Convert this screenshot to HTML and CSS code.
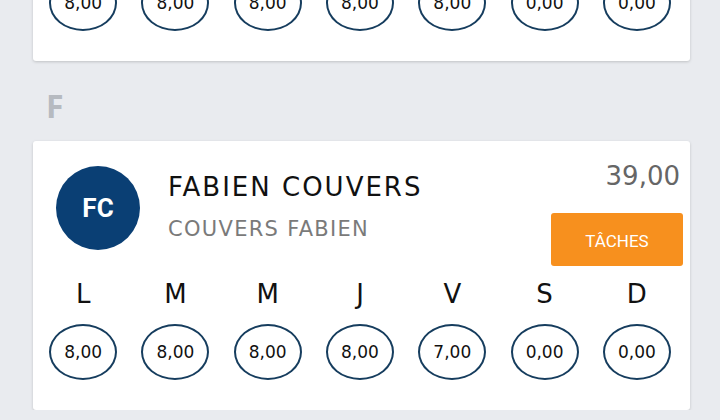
FILE: index.html
```html
<!DOCTYPE html>
<html lang="fr">
<head>
    <meta charset="UTF-8">
    <meta name="viewport" content="width=device-width, initial-scale=1.0">
    <title>Planning - Employés</title>
    <link rel="stylesheet" href="styles.css">
</head>
<body>
    <div class="list">

        <!-- Previous employee (scrolled off) -->
        <div class="card card-prev">
            <div class="card-head">
                <div class="avatar">EE</div>
                <div class="names">
                    <div class="name">EMPLOYE EXEMPLE</div>
                    <div class="subname">EXEMPLE EMPLOYE</div>
                </div>
                <div class="side">
                    <div class="total">40,00</div>
                    <a href="#" class="button">TÂCHES</a>
                </div>
            </div>
            <div class="days">
                <div class="day"><span class="letter">L</span><span class="hours">8,00</span></div>
                <div class="day"><span class="letter">M</span><span class="hours">8,00</span></div>
                <div class="day"><span class="letter">M</span><span class="hours">8,00</span></div>
                <div class="day"><span class="letter">J</span><span class="hours">8,00</span></div>
                <div class="day"><span class="letter">V</span><span class="hours">8,00</span></div>
                <div class="day"><span class="letter">S</span><span class="hours">0,00</span></div>
                <div class="day"><span class="letter">D</span><span class="hours">0,00</span></div>
            </div>
        </div>

        <h2 class="section">F</h2>

        <div class="card">
            <div class="card-head">
                <div class="avatar">FC</div>
                <div class="names">
                    <div class="name">FABIEN COUVERS</div>
                    <div class="subname">COUVERS FABIEN</div>
                </div>
                <div class="side">
                    <div class="total">39,00</div>
                    <a href="#" class="button">TÂCHES</a>
                </div>
            </div>
            <div class="days">
                <div class="day"><span class="letter">L</span><span class="hours">8,00</span></div>
                <div class="day"><span class="letter">M</span><span class="hours">8,00</span></div>
                <div class="day"><span class="letter">M</span><span class="hours">8,00</span></div>
                <div class="day"><span class="letter">J</span><span class="hours">8,00</span></div>
                <div class="day"><span class="letter">V</span><span class="hours">7,00</span></div>
                <div class="day"><span class="letter">S</span><span class="hours">0,00</span></div>
                <div class="day"><span class="letter">D</span><span class="hours">0,00</span></div>
            </div>
        </div>

    </div>
</body>
</html>
```

FILE: styles.css
```css
body {
    font-family: "DejaVu Sans", "Open Sans", sans-serif;
    margin: 0;
    background-color: #e9ebef;
    overflow: hidden;
}

.list {
    width: 657px;
    margin-left: 33px;
}

.card {
    background: white;
    border-radius: 3px;
    box-shadow: 0 1px 3px rgba(0, 0, 0, 0.18);
    padding: 25px 7px 30px 4px;
}

.card-prev {
    margin-top: -208px;
}

.card-head {
    display: flex;
    align-items: flex-start;
    height: 84px;
}

.avatar {
    width: 84px;
    height: 84px;
    margin-left: 19px;
    border-radius: 50%;
    background-color: #0a3f74;
    color: white;
    font-family: Roboto, sans-serif;
    font-weight: bold;
    font-size: 26px;
    display: flex;
    align-items: center;
    justify-content: center;
    flex-shrink: 0;
}

.names {
    margin-left: 28px;
    margin-top: 5px;
    flex: 1;
}

.name {
    font-size: 26px;
    line-height: 32px;
    letter-spacing: 2px;
    color: #111;
}

.subname {
    margin-top: 12px;
    font-size: 21px;
    line-height: 28px;
    letter-spacing: 1.3px;
    color: #7a7a7a;
}

.side {
    display: flex;
    flex-direction: column;
    align-items: flex-end;
    margin-top: -9px;
}

.total {
    font-size: 26px;
    line-height: 38px;
    color: #666;
    margin-right: 3px;
}

.button {
    display: flex;
    align-items: center;
    justify-content: center;
    margin-top: 18px;
    padding-top: 3px;
    box-sizing: border-box;
    width: 132px;
    height: 53px;
    border-radius: 3px;
    background-color: #f7901e;
    color: white;
    font-family: Roboto, sans-serif;
    font-size: 17px;
    text-decoration: none;
}

.days {
    display: grid;
    grid-template-columns: repeat(7, 1fr);
    margin-top: 28px;
}

.day {
    display: flex;
    flex-direction: column;
    align-items: center;
}

.letter {
    font-size: 26px;
    line-height: 32px;
    color: #111;
}

.hours {
    margin-top: 14px;
    width: 68px;
    height: 56px;
    box-sizing: border-box;
    border: 2px solid #163d5e;
    border-radius: 50%;
    display: flex;
    align-items: center;
    justify-content: center;
    font-size: 17px;
    color: #111;
}

.section {
    margin: 0;
    padding: 26px 0 17px 13px;
    font-family: "Open Sans", sans-serif;
    font-size: 32px;
    line-height: 37px;
    font-weight: bold;
    color: #b6bac0;
}
```
